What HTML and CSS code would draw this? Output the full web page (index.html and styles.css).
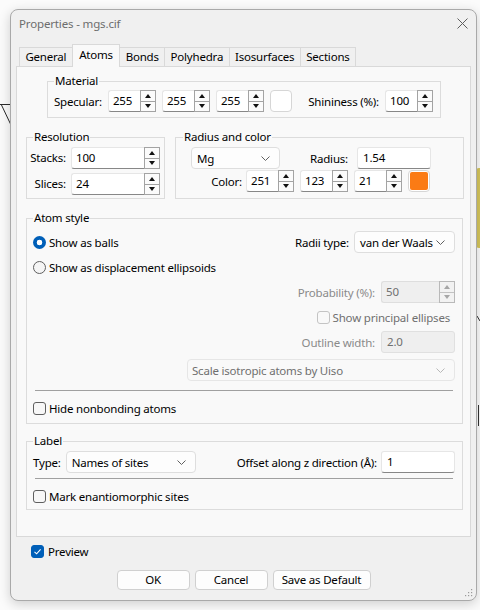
FILE: index.html
```html
<!DOCTYPE html>
<html>
<head>
<meta charset="utf-8">
<title>Properties - mgs.cif</title>
<link rel="stylesheet" href="styles.css">
</head>
<body>
<svg class="desk" width="480" height="610" viewBox="0 0 480 610">
  <path d="M0 104.5H11M1 104L11 125" stroke="#2a2a2a" stroke-width="1" fill="none"/>
  <rect x="476" y="168" width="6" height="80" rx="3" fill="#d6c65c"/>
  <path d="M477 316L480 321M478.5 405V426" stroke="#333" stroke-width="1" fill="none"/>
</svg>
<div class="window">
  <div class="titlebar">
    <span class="title">Properties - mgs.cif</span>
    <svg class="close" width="11" height="11" viewBox="0 0 11 11"><path d="M0.5 0.5L10.5 10.5M10.5 0.5L0.5 10.5" stroke="#5e5e5e" stroke-width="1"/></svg>
  </div>
  <div class="content">
    <div class="tabs">
      <div class="tab">General</div>
      <div class="tab active">Atoms</div>
      <div class="tab">Bonds</div>
      <div class="tab">Polyhedra</div>
      <div class="tab">Isosurfaces</div>
      <div class="tab">Sections</div>
    </div>
    <div class="pane">
      <fieldset class="grp material">
        <legend>Material</legend>
        <div class="row">
          <span>Specular:</span>
          <div class="spin"><span class="v">255</span><span class="b"><i class="u"></i><i class="d"></i></span></div>
          <div class="spin"><span class="v">255</span><span class="b"><i class="u"></i><i class="d"></i></span></div>
          <div class="spin"><span class="v">255</span><span class="b"><i class="u"></i><i class="d"></i></span></div>
          <div class="colorbtn white"></div>
          <span class="push">Shininess (%):</span>
          <div class="spin"><span class="v">100</span><span class="b"><i class="u"></i><i class="d"></i></span></div>
        </div>
      </fieldset>

      <div class="pair">
        <fieldset class="grp res">
          <legend>Resolution</legend>
          <div class="resgrid">
            <span class="rl">Stacks:</span>
            <div class="spin wide"><span class="v">100</span><span class="b"><i class="u"></i><i class="d"></i></span></div>
            <span class="rl">Slices:</span>
            <div class="spin wide"><span class="v">24</span><span class="b"><i class="u"></i><i class="d"></i></span></div>
          </div>
        </fieldset>
        <fieldset class="grp radius">
          <legend>Radius and color</legend>
          <div class="row">
            <div class="combo mg"><span>Mg</span><svg width="9" height="5" viewBox="0 0 9 5"><path d="M0.5 0.5L4.5 4.5L8.5 0.5" stroke="#606060" fill="none"/></svg></div>
            <span class="radlbl">Radius:</span>
            <div class="field w74">1.54</div>
          </div>
          <div class="row colorrow">
            <span class="collbl">Color:</span>
            <div class="spin"><span class="v">251</span><span class="b"><i class="u"></i><i class="d"></i></span></div>
            <div class="spin"><span class="v">123</span><span class="b"><i class="u"></i><i class="d"></i></span></div>
            <div class="spin"><span class="v">21</span><span class="b"><i class="u"></i><i class="d"></i></span></div>
            <div class="colorbtn"><span class="swatch"></span></div>
          </div>
        </fieldset>
      </div>

      <fieldset class="grp atomstyle">
        <legend>Atom style</legend>
        <div class="row sb">
          <span class="opt"><span class="rb on"></span>Show as balls</span>
          <span class="rgt"><span>Radii type:</span>
            <span class="combo vdw"><span>van der Waals</span><svg width="9" height="5" viewBox="0 0 9 5"><path d="M0.5 0.5L4.5 4.5L8.5 0.5" stroke="#606060" fill="none"/></svg></span>
          </span>
        </div>
        <div class="row">
          <span class="opt"><span class="rb"></span>Show as displacement ellipsoids</span>
        </div>
        <div class="row end">
          <span class="dl">Probability (%):</span>
          <div class="spin w74 dis"><span class="v">50</span><span class="b"><i class="u"></i><i class="d"></i></span></div>
        </div>
        <div class="row end">
          <span class="opt dtext shift"><span class="cb dcb"></span>Show principal ellipses</span>
        </div>
        <div class="row end">
          <span class="dl">Outline width:</span>
          <div class="field w74 dis">2.0</div>
        </div>
        <div class="row end r6">
          <div class="combo scale dis"><span>Scale isotropic atoms by Uiso</span><svg width="9" height="5" viewBox="0 0 9 5"><path d="M0.5 0.5L4.5 4.5L8.5 0.5" stroke="#b8b8b8" fill="none"/></svg></div>
        </div>
        <div class="sep sep1"></div>
        <div class="row r7">
          <span class="opt"><span class="cb"></span>Hide nonbonding atoms</span>
        </div>
      </fieldset>

      <fieldset class="grp labelgrp">
        <legend>Label</legend>
        <div class="row sb">
          <span class="rgt"><span>Type:</span>
            <span class="combo names"><span>Names of sites</span><svg width="9" height="5" viewBox="0 0 9 5"><path d="M0.5 0.5L4.5 4.5L8.5 0.5" stroke="#606060" fill="none"/></svg></span>
          </span>
          <span class="rgt off"><span>Offset along z direction (Å):</span>
            <span class="field w74">1</span>
          </span>
        </div>
        <div class="sep sep2"></div>
        <div class="row r8">
          <span class="opt"><span class="cb"></span>Mark enantiomorphic sites</span>
        </div>
      </fieldset>
    </div>

    <div class="preview">
      <span class="cb on"><svg width="11" height="11" viewBox="0 0 11 11"><path d="M2.5 5.8L4.6 7.8L8.6 3.3" stroke="#fff" stroke-width="1.1" fill="none"/></svg></span>
      <span>Preview</span>
    </div>
    <div class="buttons">
      <div class="btn">OK</div>
      <div class="btn">Cancel</div>
      <div class="btn save">Save as Default</div>
    </div>
  </div>
  <svg class="grip" width="9" height="9" viewBox="0 0 9 9">
    <g fill="#9a9a9a"><rect x="7" y="1" width="1.2" height="1.2"/><rect x="4" y="4" width="1.2" height="1.2"/><rect x="7" y="4" width="1.2" height="1.2"/><rect x="1" y="7" width="1.2" height="1.2"/><rect x="4" y="7" width="1.2" height="1.2"/><rect x="7" y="7" width="1.2" height="1.2"/></g>
  </svg>
</div>
</body>
</html>
```
FILE: styles.css
```css
* { box-sizing: border-box; }
html, body { margin: 0; padding: 0; }
body {
  width: 480px;
  height: 610px;
  background: #fbfbfb;
  font-family: "Noto Sans", "DejaVu Sans", sans-serif;
  font-size: 11.5px;
  letter-spacing: -0.2px;
  color: #000;
  position: relative;
  overflow: hidden;
}
.desk { position: absolute; left: 0; top: 0; }

.window {
  position: absolute;
  left: 10px;
  top: 9px;
  width: 467px;
  height: 592px;
  background: #f0f0f0;
  border: 1px solid #a9a9a9;
  border-radius: 8px;
  box-shadow: 0 3px 12px rgba(0, 0, 0, 0.18);
  display: flex;
  flex-direction: column;
}
.titlebar {
  height: 34px;
  flex: none;
  display: flex;
  justify-content: space-between;
  padding: 6px 8px 0 8px;
}
.title { line-height: 16px; color: #6d6d6d; font-size: 11.5px; letter-spacing: -0.15px; }
.close { margin-top: 2px; }

.content {
  flex: 1;
  display: flex;
  flex-direction: column;
  padding: 0 5px;
}
.tabs {
  display: flex;
  align-items: flex-end;
  height: 22px;
  padding-left: 3px;
}
.tab {
  height: 19px;
  line-height: 17px;
  padding: 0 5.4px;
  border: 1px solid #d9d9d9;
  border-bottom: none;
  margin-left: -1px;
  background: #f0f0f0;
}
.tab:first-child { margin-left: 0; }
.tab.active {
  height: 23px;
  margin-bottom: -1px;
  line-height: 19px;
  padding: 0 6.4px;
  background: #f9f9f9;
  position: relative;
  z-index: 1;
}
.pane {
  height: 471px;
  flex: none;
  border: 1px solid #d9d9d9;
  background: #f9f9f9;
  padding-top: 6px;
}

.grp {
  margin: 0;
  border: 1px solid #dcdcdc;
  min-width: 0;
}
legend {
  padding: 0 1px;
  line-height: 16px;
}
.row {
  display: flex;
  align-items: center;
  height: 22px;
}
.sb { justify-content: space-between; }
.end { justify-content: flex-end; }
.rgt { display: flex; align-items: center; gap: 5px; }

/* Material */
.material {
  margin-left: 30px;
  width: 394px;
  padding: 1px 7px 5px 6px;
}
.material .row { gap: 6px; }
.material .push { margin-left: auto; }

/* spin box */
.spin {
  display: flex;
  width: 48px;
  height: 22px;
  flex: none;
}
.spin .v {
  flex: 1;
  background: #fff;
  border: 1px solid #e6e6e6;
  border-bottom-color: #878787;
  border-right: none;
  border-radius: 3px 0 0 3px;
  line-height: 20px;
  padding-left: 4px;
}
.spin .b {
  width: 16px;
  display: flex;
  flex-direction: column;
  border: 1px solid #a3a3a3;
  background: #fbfbfb;
}
.spin .b i {
  flex: 1;
  display: flex;
  align-items: center;
  justify-content: center;
}
.spin .b .u { border-bottom: 1px solid #a3a3a3; }
.spin .b .u::after {
  content: "";
  border-left: 3.5px solid transparent;
  border-right: 3.5px solid transparent;
  border-bottom: 4px solid #111;
}
.spin .b .d::after {
  content: "";
  border-left: 3.5px solid transparent;
  border-right: 3.5px solid transparent;
  border-top: 4px solid #111;
}
.spin.wide { width: 89px; }
.w74 { width: 74px; }

.spin.dis .v {
  background: #efefef;
  border-color: #dedede;
  color: #6f6f6f;
}
.spin.dis .b { border-color: #b9b9b9; background: #f2f2f2; }
.spin.dis .b .u { border-bottom-color: #c2c2c2; }
.spin.dis .b .u::after { border-bottom-color: #a6a6a6; }
.spin.dis .b .d::after { border-top-color: #a6a6a6; }

.colorbtn {
  width: 22px;
  height: 22px;
  flex: none;
  border: 1px solid #d6d6d6;
  border-radius: 4px;
  background: #fff;
  display: flex;
  align-items: center;
  justify-content: center;
}
.swatch {
  width: 18px;
  height: 18px;
  border-radius: 2px;
  background: #fb7b15;
}

/* text field */
.field {
  height: 22px;
  flex: none;
  background: #fff;
  border: 1px solid #e6e6e6;
  border-bottom-color: #878787;
  border-radius: 3px;
  padding-left: 5px;
  line-height: 20px;
}
.field.dis {
  background: #efefef;
  border-color: #e0e0e0;
  color: #6f6f6f;
}

/* combo */
.combo {
  display: flex;
  align-items: center;
  justify-content: space-between;
  height: 22px;
  flex: none;
  border: 1px solid #dedede;
  border-radius: 4px;
  background: #fdfdfd;
  padding: 0 9px 0 5px;
}
.combo.dis { background: #f9f9f9; border-color: #e6e6e6; color: #6f6f6f; }
.mg { width: 89px; margin-left: 8px; }
.vdw { width: 101px; }
.scale { width: 268px; padding-left: 4px; }
.names { width: 130px; }

/* two groups */
.pair {
  display: flex;
  margin-top: 11px;
  margin-left: 9px;
  gap: 10px;
}
.res {
  width: 139px;
  padding: 2px 4px 3px 6px;
}
.resgrid {
  margin-left: -3px;
  display: grid;
  grid-template-columns: 36px 89px;
  column-gap: 5px;
  row-gap: 4px;
  align-items: center;
}
.rl { text-align: right; line-height: 22px; }
.radius {
  width: 289px;
  padding: 2px 7px 6px 7px;
}
.radlbl { width: 68px; text-align: right; margin-right: 9px; }
.colorrow { margin-top: 1px; gap: 6px; }
.collbl { width: 59px; text-align: right; margin-right: -2px; }

/* atom style */
.atomstyle {
  margin: 11px 0 0 9px;
  width: 437px;
  padding: 5px 7px 4px 6px;
}
.atomstyle .row + .row { margin-top: 3px; }
.atomstyle .row.r6 { margin-top: 6px; }
.atomstyle .row.r7 { margin-top: 6px; }
.dl { color: #8a8a8a; margin-right: 6px; }
.dtext { color: #707070; }
.shift { margin-right: 5px; }

.opt { display: flex; align-items: center; gap: 3px; }
.rb {
  width: 13px;
  height: 13px;
  border-radius: 50%;
  border: 1px solid #5f5f5f;
  background: #f5f5f5;
  flex: none;
}
.rb.on {
  border: none;
  background: radial-gradient(circle, #fff 0 2.6px, #005fb8 3.1px);
}
.cb {
  width: 13px;
  height: 13px;
  border: 1px solid #5f5f5f;
  border-radius: 3px;
  background: #f7f7f7;
  flex: none;
  display: flex;
  align-items: center;
  justify-content: center;
}
.cb.dcb { border-color: #c4c4c4; background: #f9f9f9; }
.cb.on { border-color: #005fb8; background: #005fb8; }

.sep {
  height: 1px;
  background: #a0a0a0;
  margin: 0 2px;
}
.sep1 { margin-top: 9px; }

/* label group */
.labelgrp {
  margin: 9px 0 0 9px;
  width: 437px;
  padding: 2px 7px 2px 6px;
}
.off { gap: 4px; }
.sep2 { margin-top: 5px; }
.r8 { margin-top: 6px; }

/* bottom */
.preview {
  display: flex;
  align-items: center;
  gap: 4px;
  height: 20px;
  margin: 4px 0 0 15px;
}
.buttons {
  display: flex;
  justify-content: center;
  gap: 5px;
  margin-top: 9px;
}
.btn {
  width: 73px;
  height: 20px;
  border: 1px solid #d0d0d0;
  border-radius: 4px;
  background: #fdfdfd;
  text-align: center;
  line-height: 18px;
}
.btn.save { width: 98px; }
.grip { position: absolute; right: 3px; bottom: 3px; }
```
